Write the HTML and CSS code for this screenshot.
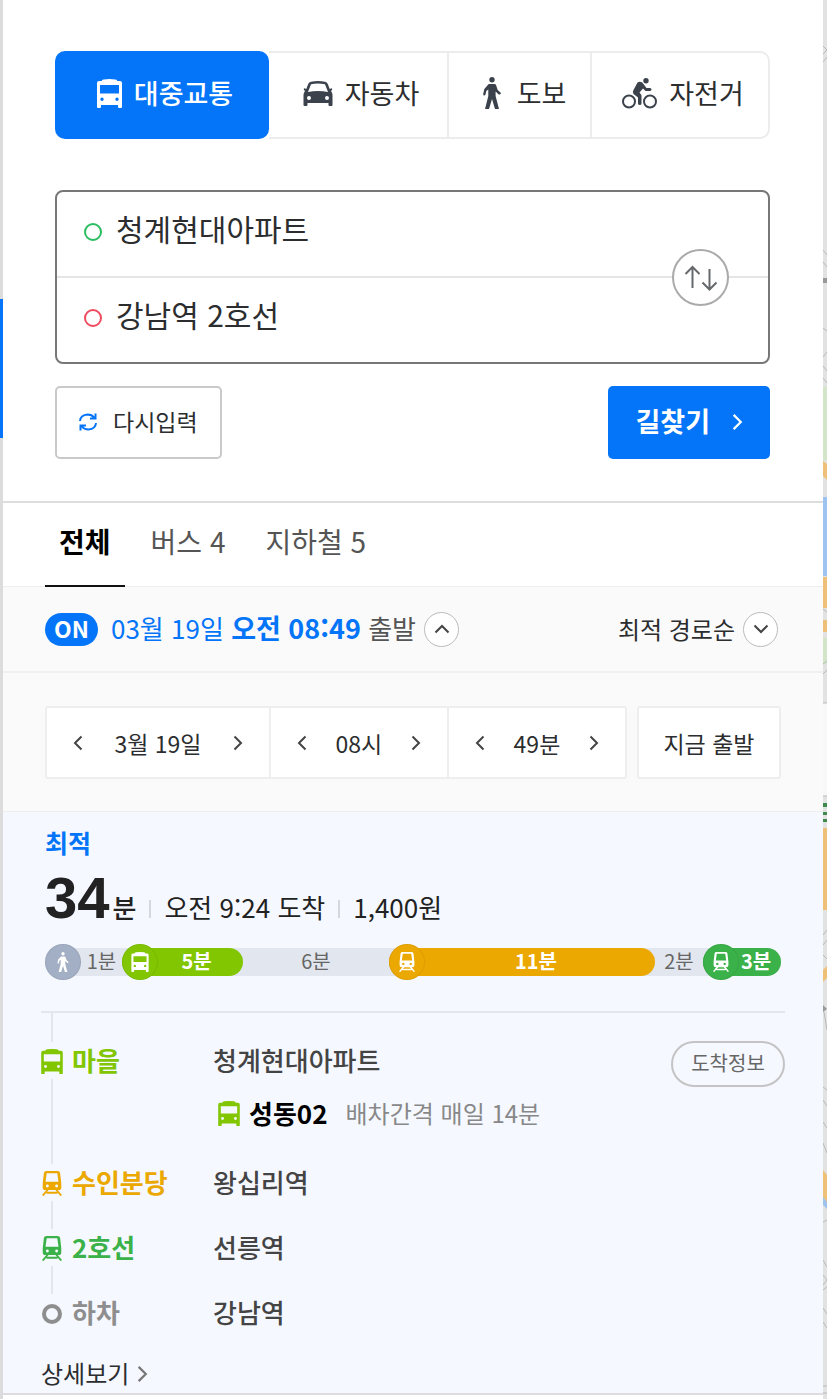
FILE: index.html
```html
<!DOCTYPE html>
<html lang="ko">
<head>
	<meta charset="UTF-8">
	<meta name="viewport" content="width=device-width, initial-scale=1">
	<title>길찾기</title>
	<link rel="stylesheet" href="styles.css">
</head>
<body>

	<!-- Icon set -->
	<svg class="sprite" aria-hidden="true">
		<symbol id="bus" viewBox="0 0 25 29">
			<path fill-rule="evenodd" d="M5 1.500Q5 0 12.500 0T20 1.500L20.500 2H23Q25 2 25 4V28Q25 29 24 29H22Q21 29 21 28V26H4V28Q4 29 3 29H1Q0 29 0 28V4Q0 2 2 2H4.500ZM3 6V14.500H22V6ZM5 18.500A1.700 1.700 0 1 0 5 21.900A1.700 1.700 0 1 0 5 18.500ZM20 18.500A1.700 1.700 0 1 0 20 21.900A1.700 1.700 0 1 0 20 18.500Z"/>
		</symbol>
		<symbol id="train" viewBox="0 0 22 27">
			<path fill-rule="evenodd" d="M5 0H17Q19.300 0 19.700 2L21 13V18Q21 20.500 18 20.500H4Q1 20.500 1 18V13L2.300 2Q2.700 0 5 0ZM5.300 2.500L4 11.500H18L16.700 2.500ZM6 14.500A1.600 1.600 0 1 0 6 17.700A1.600 1.600 0 1 0 6 14.500ZM16 14.500A1.600 1.600 0 1 0 16 17.700A1.600 1.600 0 1 0 16 14.500Z"/>
			<path d="M6.500 20L1 26.500M15.500 20L21 26.500M5 23.500H17" fill="none" stroke="currentColor" stroke-width="2"/>
		</symbol>
		<symbol id="walk" viewBox="0 0 18 32">
			<circle cx="9" cy="2.700" r="2.700"/>
			<path d="M6 7H11.500Q12.500 7 13 8L14.700 13L17.500 15.500Q18.300 16.500 17.300 17.300Q16.500 17.900 15.500 17.200L12.600 14.500V19L16 32H12L9 22L6 32H2L5.300 19V12.500L3.300 14L2.500 17.500Q2 18.800 1 18.500Q0 18.200 .2 17L1.200 12.500Q1.400 11.700 2 11.200L5 7.800Q5.400 7 6 7Z"/>
		</symbol>
		<symbol id="car" viewBox="0 0 30 25">
			<path fill-rule="evenodd" d="M8 0.700Q15 -.5 22 .7Q24 1 24.800 3L26.700 8L28.500 7.200Q30 8 28.500 9.500L28 10Q29.500 12 29.500 14V24Q29.500 25 28.500 25H26.500Q25.500 25 25.500 24V22H4.500V24Q4.500 25 3.500 25H1.500Q.5 25 .5 24V14Q.5 12 2 10L1.500 9.500Q0 8 1.500 7.200L3.300 8L5.200 3Q6 1 8 .7ZM8 3.200L5 11Q15 9 25 11L22 3.200Q15 2 8 3.200ZM6 15A2 2 0 1 0 6 19A2 2 0 1 0 6 15ZM24 15A2 2 0 1 0 24 19A2 2 0 1 0 24 15Z"/>
		</symbol>
		<symbol id="bike" viewBox="0 0 35 31">
			<circle cx="7" cy="23.500" r="6" fill="none" stroke="currentColor" stroke-width="2"/>
			<circle cx="28" cy="23.500" r="6" fill="none" stroke="currentColor" stroke-width="2"/>
			<circle cx="24" cy="2.700" r="2.700"/>
			<path d="M15.500 4.500Q18 3 20.500 4.700L24.500 10H28Q29.500 10.200 29.500 11.500T28 13H23.500L21 10.500L17.500 14.500L19 16.500Q19.500 17 19.500 18V25.500Q19.400 27 17.800 27T16 25.500V19.500L11.500 16Q10 14.500 11.500 12Z"/>
		</symbol>
		<symbol id="chevron" viewBox="0 0 10 16">
			<path d="M1.500 1.500L8 8L1.500 14.500" fill="none" stroke="currentColor" stroke-width="2"/>
		</symbol>
	</svg>

	<div class="rail"><span class="rail-handle"></span></div>

	<main class="panel">

		<!-- Search -->
		<form class="search">
			<div class="modes">
				<button type="button" class="mode active"><svg class="icon-bus"><use href="#bus"/></svg>대중교통</button>
				<button type="button" class="mode"><svg class="icon-car"><use href="#car"/></svg>자동차</button>
				<button type="button" class="mode"><svg class="icon-walk"><use href="#walk"/></svg>도보</button>
				<button type="button" class="mode"><svg class="icon-bike"><use href="#bike"/></svg>자전거</button>
			</div>

			<div class="places">
				<div class="place">
					<label class="ring start" for="start" aria-label="출발지"></label>
					<input type="text" id="start" value="청계현대아파트">
				</div>
				<div class="place">
					<label class="ring goal" for="goal" aria-label="도착지"></label>
					<input type="text" id="goal" value="강남역 2호선">
				</div>
				<button type="button" class="swap" aria-label="출발지 도착지 바꾸기">
					<svg class="stroked" width="34" height="26" viewBox="0 0 34 26">
						<path d="M8.500 23V2M1.500 9L8.500 2L15.500 9M25.500 4V24.500M18.500 17.500L25.500 24.500L32.500 17.500"/>
					</svg>
				</button>
			</div>

			<div class="actions">
				<button type="reset" class="reset">
					<svg class="stroked" width="18" height="18" viewBox="0 0 18 18">
						<path d="M1 8Q1.500 2 8.500 1.500Q13 1.500 15 4.500M17 10Q16.500 16 9.500 16.500Q5 16.500 3 13.500M16.500 .5V5.500H11M1.500 17.500V12.500H7"/>
					</svg>
					다시입력
				</button>
				<button type="submit" class="find">길찾기 <svg class="next"><use href="#chevron"/></svg></button>
			</div>
		</form>

		<!-- Result filters -->
		<nav class="tabs">
			<a href="#all" class="tab active">전체</a>
			<a href="#buses" class="tab">버스 4</a>
			<a href="#subways" class="tab">지하철 5</a>
		</nav>

		<div class="options">
			<button type="button" class="on" aria-pressed="true">ON</button>
			<p class="depart">03월 19일 <b>오전 08:49</b> <span>출발</span></p>
			<button type="button" class="round" aria-label="시간 설정 닫기"><svg class="arrow up"><use href="#chevron"/></svg></button>
			<button type="button" class="sort">최적 경로순 <span class="round"><svg class="arrow down"><use href="#chevron"/></svg></span></button>
		</div>

		<div class="times">
			<div class="steppers">
				<div class="stepper">
					<button type="button" aria-label="이전 날"><svg class="arrow left"><use href="#chevron"/></svg></button>
					<span>3월 19일</span>
					<button type="button" aria-label="다음 날"><svg class="arrow"><use href="#chevron"/></svg></button>
				</div>
				<div class="stepper">
					<button type="button" aria-label="이전 시"><svg class="arrow left"><use href="#chevron"/></svg></button>
					<span>08시</span>
					<button type="button" aria-label="다음 시"><svg class="arrow"><use href="#chevron"/></svg></button>
				</div>
				<div class="stepper">
					<button type="button" aria-label="이전 분"><svg class="arrow left"><use href="#chevron"/></svg></button>
					<span>49분</span>
					<button type="button" aria-label="다음 분"><svg class="arrow"><use href="#chevron"/></svg></button>
				</div>
			</div>
			<button type="button" class="now">지금 출발</button>
		</div>

		<!-- Best route -->
		<section class="route">
			<h2>최적</h2>
			<div class="summary">
				<p class="total"><strong>34</strong>분</p>
				<p>오전 9:24 도착</p>
				<p>1,400원</p>
			</div>

			<div class="graph">
				<div class="leg" style="flex-grow: 77"><span class="badge walk"><svg><use href="#walk"/></svg></span><span class="min">1분</span></div>
				<div class="leg ride village" style="flex-grow: 121"><span class="badge"><svg><use href="#bus"/></svg></span><span class="min">5분</span></div>
				<div class="leg" style="flex-grow: 146"><span class="min">6분</span></div>
				<div class="leg ride suin" style="flex-grow: 266"><span class="badge"><svg><use href="#train"/></svg></span><span class="min">11분</span></div>
				<div class="leg" style="flex-grow: 48"><span class="min">2분</span></div>
				<div class="leg ride line2" style="flex-grow: 78"><span class="badge"><svg><use href="#train"/></svg></span><span class="min">3분</span></div>
			</div>

			<ol class="steps">
				<li class="step">
					<span class="mark village"><svg><use href="#bus"/></svg></span>
					<b class="line village">마을</b>
					<div class="stop">
						<p>청계현대아파트</p>
						<p class="bus-info"><svg class="village"><use href="#bus"/></svg><b>성동02</b> <span>배차간격 매일 14분</span></p>
					</div>
					<button type="button" class="arrival">도착정보</button>
				</li>
				<li class="step">
					<span class="mark suin"><svg><use href="#train"/></svg></span>
					<b class="line suin">수인분당</b>
					<p class="stop">왕십리역</p>
				</li>
				<li class="step">
					<span class="mark line2"><svg><use href="#train"/></svg></span>
					<b class="line line2">2호선</b>
					<p class="stop">선릉역</p>
				</li>
				<li class="step">
					<span class="mark"><span class="end"></span></span>
					<b class="line off">하차</b>
					<p class="stop">강남역</p>
				</li>
			</ol>

			<a href="#detail" class="detail">상세보기 <svg class="next"><use href="#chevron"/></svg></a>
		</section>
	</main>

	<!-- Edge of the map -->
	<svg class="map" viewBox="0 0 4 1399" preserveAspectRatio="none" aria-hidden="true">
		<path fill="#d3e5c8" d="M0 387H4V460H0ZM0 638H4V664H0Z"/>
		<path fill="#eec078" d="M0 461L4 464V480L0 476ZM0 577H4V608H0ZM0 620H4V632H0ZM0 828H4V910H0ZM0 970L4 966V978L0 982ZM0 1170L4 1175V1203L0 1197Z"/>
		<path fill="#9ec3ee" d="M0 497H4V576H0ZM0 1197L4 1202V1209L0 1205Z"/>
		<path fill="#f8f8f8" d="M0 703H4V796H0Z"/>
		<path fill="#3f8a4c" d="M0 803H4V807H0ZM0 812H4V815H0ZM0 819H4V822H0Z"/>
		<path fill="#999" d="M0 278H4V283H0ZM0 1005L4 1009L0 1012Z"/>
		<path fill="none" stroke="#b9b9b9" d="M0 46L4 50L0 54M0 62L4 57M0 250L4 255M0 262L4 267M0 328L4 331M0 357L4 352M0 366L4 371M0 378L4 383M0 609L4 612M0 664L4 661M0 674L4 670M0 703H4M0 796H4M0 935L4 930M0 945L4 940M0 955L4 959M1 1012L4 1030M0 1087L4 1090M0 1100L4 1106M0 1122L4 1128M0 1143L4 1153M0 1222L4 1220M0 1260L4 1267M0 1275L4 1280L0 1285M0 1290L4 1287M0 1308L4 1314M0 1322L4 1328M0 1386H4M0 1393H4"/>
	</svg>

</body>
</html>
```
FILE: styles.css
```css
* {
	box-sizing: border-box;
	margin: 0;
	padding: 0;
}

body {
	display: flex;
	min-height: 100vh;
	background: #fff;
	color: #2b2d2f;
	font-family: "Noto Sans CJK KR", sans-serif;
	font-size: 26px;
	line-height: 36px;
}

button, input {
	border: 0;
	background: none;
	color: inherit;
	font: inherit;
}

button {
	display: flex;
	align-items: center;
	justify-content: center;
	white-space: nowrap;
	cursor: pointer;
}

a {
	color: inherit;
	text-decoration: none;
}

svg {
	flex: none;
	fill: currentColor;
}

.stroked {
	fill: none;
	stroke: currentColor;
	stroke-width: 2;
}

.sprite {
	position: absolute;
	width: 0;
	height: 0;
}

/* window edges */
.rail {
	width: 3px;
	padding-top: 299px;
	background: #dcdcdc;
}
.rail-handle {
	display: block;
	height: 139px;
	background: #0475f8;
}
.panel {
	flex: 1;
	min-width: 0;
}
.map {
	width: 4px;
	height: auto;
	background: #e2e2e2;
}

/* search */
.search {
	display: flex;
	flex-direction: column;
	padding: 51px 53px 42px 52px;
	border-bottom: 2px solid #ddd;
}

.modes {
	display: grid;
	grid-template-columns: 214fr 180fr 143fr 178fr;
	height: 88px;
	font-size: 27px;
}
.mode {
	gap: 12px;
	padding: 0 0 4px 6px;
	border: 2px solid #ececec;
	border-left: 0;
	color: #2b2d2f;
}
.mode svg {
	color: #3b424b;
}
.mode:last-child {
	border-radius: 0 10px 10px 0;
}
.mode.active {
	border: 0;
	border-radius: 10px;
	background: #0475f8;
	color: #fff;
	font-weight: 500;
}
.mode.active svg {
	color: #fff;
}
.icon-bus { width: 25px; height: 29px; }
.icon-car { width: 30px; height: 25px; }
.icon-walk { width: 18px; height: 32px; margin: 0 4px; }
.icon-bike { width: 35px; height: 31px; }

.places {
	position: relative;
	margin-top: 51px;
	border: 2px solid #777;
	border-radius: 8px;
}
.place {
	display: flex;
	align-items: center;
	height: 84px;
	padding: 0 0 4px 27px;
}
.place + .place {
	height: 86px;
	border-top: 2px solid #e5e5e5;
}
.place input {
	flex: 1;
	min-width: 0;
	height: 76px;
	padding: 0 110px 8px 14px;
	font-size: 30px;
	outline: 0;
}
.ring {
	width: 18px;
	height: 18px;
	border: 2px solid;
	border-radius: 50%;
}
.ring.start { color: #2bbd5e; }
.ring.goal { color: #ef4b5f; }
.swap {
	position: absolute;
	top: calc(50% - 28px);
	right: 39px;
	width: 57px;
	height: 57px;
	border: 2px solid #aaa;
	border-radius: 50%;
	background: #fff;
	color: #66696c;
}

.actions {
	display: flex;
	justify-content: space-between;
	margin-top: 22px;
}
.reset, .find {
	height: 73px;
	padding: 0 22px 4px;
	border-radius: 5px;
}
.reset {
	gap: 16px;
	border: 2px solid #c9c9c9;
	font-size: 23px;
}
.reset svg {
	margin-top: 2px;
	color: #0475f8;
}
.find {
	gap: 22px;
	padding: 0 27px 4px;
	background: #0475f8;
	color: #fff;
	font-size: 27px;
	font-weight: 700;
}
.next {
	width: 11px;
	height: 18px;
	margin-top: 2px;
}

/* filters */
.tabs {
	display: flex;
	gap: 12px;
	height: 84px;
	padding-left: 42px;
	border-bottom: 1px solid #eee;
	color: #555;
	font-size: 28px;
}
.tab {
	height: 84px;
	padding: 20px 14px 0;
}
.tab.active {
	border-bottom: 2px solid #111;
	color: #000;
	font-weight: 700;
}

.options {
	display: flex;
	align-items: center;
	height: 86px;
	padding: 0 45px 0 42px;
	border-bottom: 2px solid #f0f0f0;
	background: #fafafa;
}
.on {
	width: 53px;
	height: 33px;
	padding-bottom: 2px;
	border-radius: 17px;
	background: #0475f8;
	color: #fff;
	font-size: 23px;
	font-weight: 700;
}
.depart {
	margin: 0 8px 2px 13px;
	color: #0475f8;
	white-space: nowrap;
}
.depart b {
	font-size: 27px;
}
.depart span {
	color: #555;
}
.round {
	display: flex;
	align-items: center;
	justify-content: center;
	width: 35px;
	height: 35px;
	border: 1px solid #bbb;
	border-radius: 50%;
	background: #fff;
	color: #555;
}
.sort {
	gap: 8px;
	margin-left: auto;
	font-size: 24px;
}
.arrow {
	width: 10px;
	height: 16px;
	color: #444;
}
.arrow.left { transform: rotate(180deg); }
.arrow.up { transform: rotate(-90deg); }
.arrow.down { transform: rotate(90deg); }

.times {
	display: flex;
	gap: 10px;
	padding: 33px 42px 32px;
	border-bottom: 1px solid #eee;
	background: #fafafa;
	font-size: 23px;
}
.steppers {
	display: grid;
	flex: 1;
	grid-template-columns: 223fr 179fr 179fr;
	height: 73px;
	border: 2px solid #eee;
	border-radius: 3px;
	background: #fff;
}
.stepper {
	display: flex;
	align-items: center;
	justify-content: space-between;
	padding: 0 26px;
}
.stepper + .stepper {
	border-left: 2px solid #eee;
}
.stepper button {
	height: 40px;
}
.now {
	width: 144px;
	height: 73px;
	border: 2px solid #eee;
	border-radius: 3px;
	background: #fff;
}

/* route */
.village { color: #81c600; }
.suin { color: #eba800; }
.line2 { color: #3bb149; }
.off { color: #8e8e8e; }

.route {
	padding: 12px 38px 2px;
	border-bottom: 2px solid #ddd;
	background: #f5f8ff;
}
.route h2 {
	padding-left: 4px;
	color: #0475f8;
	font-size: 25px;
	font-weight: 700;
}
.summary {
	display: flex;
	align-items: baseline;
	height: 64px;
	margin-top: 6px;
	padding-left: 4px;
	color: #222;
	line-height: 64px;
}
.summary p + p::before {
	content: "";
	display: inline-block;
	width: 2px;
	height: 18px;
	margin: 0 13px;
	background: #d3d7e0;
}
.total {
	font-weight: 500;
}
.total strong {
	margin-right: 3px;
	font-family: "Liberation Sans", sans-serif;
	font-size: 58px;
	font-weight: 700;
}

.graph {
	display: flex;
	height: 28px;
	margin: 18px 4px 35px;
	border-radius: 14px;
	background: #e2e6ef;
	color: #666;
	font-size: 20px;
	line-height: 28px;
}
.leg {
	display: flex;
	flex: 1 1 0;
	align-items: center;
	min-width: 0;
}
.min {
	flex: 1;
	padding-bottom: 2px;
	text-align: center;
}
.ride {
	border-radius: 14px;
	background: currentColor;
}
.ride .min {
	padding-right: 8px;
	color: #fff;
	font-weight: 700;
}
.badge {
	display: flex;
	flex: none;
	align-items: center;
	justify-content: center;
	width: 36px;
	height: 36px;
	border: 1px solid rgba(0, 0, 0, .06);
	border-radius: 50%;
	background: currentColor;
}
.badge.walk {
	color: #a3afc5;
}
.badge svg {
	width: 20px;
	height: 20px;
	color: #fff;
}

.steps {
	border-top: 2px solid #e2e6ef;
	color: #444;
	font-weight: 500;
	list-style: none;
}
.steps::before {
	content: "";
	display: block;
	width: 2px;
	height: 29px;
	margin: 0 0 5px 10px;
	background: #e2e6ef;
}
.step {
	display: grid;
	grid-template-columns: 22px 150px 1fr auto;
	min-height: 65px;
	line-height: 26px;
}
.mark {
	display: flex;
	flex-direction: column;
	align-items: center;
}
.mark svg {
	width: 22px;
	height: 25px;
	margin-top: 2px;
}
/* rail down to the next stop */
.step:not(:last-child) .mark::after {
	content: "";
	flex: 1;
	width: 2px;
	margin: 5px 0;
	background: #e2e6ef;
}
.end {
	width: 20px;
	height: 20px;
	margin-top: 5px;
	border: 4px solid #8e8e8e;
	border-radius: 50%;
}
.line {
	padding-left: 9px;
}
.step:first-child {
	min-height: 122px;
}
.bus-info {
	display: flex;
	align-items: center;
	margin-top: 26px;
	padding-left: 5px;
}
.bus-info svg {
	width: 22px;
	height: 25px;
	margin: 2px 9px 0 0;
}
.bus-info b {
	margin-right: 18px;
	color: #000;
}
.bus-info span {
	color: #888;
	font-size: 24px;
	font-weight: 400;
}
.arrival {
	width: 114px;
	height: 46px;
	margin-top: -6px;
	padding-bottom: 2px;
	border: 2px solid #c4c4c4;
	border-radius: 23px;
	color: #666;
	font-size: 20px;
	font-weight: 400;
}
.step:last-child {
	min-height: 55px;
}
.detail {
	display: inline-flex;
	align-items: center;
	gap: 8px;
	font-size: 24px;
}
.detail .next {
	color: #777;
}
```
